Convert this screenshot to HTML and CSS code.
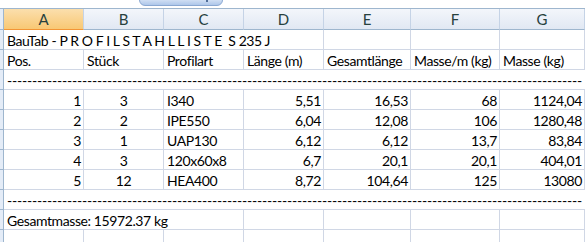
FILE: index.html
```html
<!DOCTYPE html>
<html>
<head>
<title>BauTab Profilstahlliste</title>
	<meta charset="utf-8">
	<link rel="stylesheet" href="styles.css">
</head>
<body>
<div class="window">
	<div class="topbar">
		<div class="tab"><span class="grip"></span></div>
	</div>
	<div class="sheet">
		<!-- Spaltenkopf -->
		<div class="rh hd"></div>
		<div class="ch sel">A</div>
		<div class="ch">B</div>
		<div class="ch">C</div>
		<div class="ch">D</div>
		<div class="ch">E</div>
		<div class="ch">F</div>
		<div class="ch">G</div>
		<div class="ch rest"></div>

		<!-- 1 -->
		<div class="rh"></div>
		<div class="c span4">BauTab - P R O F I L S T A H L L I S T E&nbsp; S 235 J</div>
		<div class="c"></div><div class="c"></div><div class="c"></div><div class="c rest"></div>

		<!-- 2 -->
		<div class="rh"></div>
		<div class="c">Pos.</div>
		<div class="c">Stück</div>
		<div class="c">Profilart</div>
		<div class="c">Länge (m)</div>
		<div class="c">Gesamtlänge</div>
		<div class="c">Masse/m (kg)</div>
		<div class="c">Masse (kg)</div>
		<div class="c rest"></div>

		<!-- 3 -->
		<div class="rh"></div>
		<div class="c dash">-------------------------------------------------------------------------------------------------------------------</div>

		<!-- Daten -->
		<div class="rh"></div>
		<div class="c r">1</div><div class="c m">3</div><div class="c">I340</div>
		<div class="c r">5,51</div><div class="c r">16,53</div><div class="c r">68</div><div class="c r">1124,04</div><div class="c rest"></div>

		<div class="rh"></div>
		<div class="c r">2</div><div class="c m">2</div><div class="c">IPE550</div>
		<div class="c r">6,04</div><div class="c r">12,08</div><div class="c r">106</div><div class="c r">1280,48</div><div class="c rest"></div>

		<div class="rh"></div>
		<div class="c r">3</div><div class="c m">1</div><div class="c">UAP130</div>
		<div class="c r">6,12</div><div class="c r">6,12</div><div class="c r">13,7</div><div class="c r">83,84</div><div class="c rest"></div>

		<div class="rh"></div>
		<div class="c r">4</div><div class="c m">3</div><div class="c">120x60x8</div>
		<div class="c r">6,7</div><div class="c r">20,1</div><div class="c r">20,1</div><div class="c r">404,01</div><div class="c rest"></div>

		<div class="rh"></div>
		<div class="c r">5</div><div class="c m">12</div><div class="c">HEA400</div>
		<div class="c r">8,72</div><div class="c r">104,64</div><div class="c r">125</div><div class="c r">13080</div><div class="c rest"></div>

		<!-- 9 -->
		<div class="rh"></div>
		<div class="c dash">-------------------------------------------------------------------------------------------------------------------</div>

		<!-- 10 -->
		<div class="rh"></div>
		<div class="c span3">Gesamtmasse: 15972.37 kg</div>
		<div class="c"></div><div class="c"></div><div class="c"></div><div class="c"></div><div class="c rest"></div>

		<!-- 11 -->
		<div class="rh"></div>
		<div class="c"></div><div class="c"></div><div class="c"></div><div class="c"></div>
		<div class="c"></div><div class="c"></div><div class="c"></div><div class="c rest"></div>
	</div>
</div>
</body>
</html>
```

FILE: styles.css
```css
body {
	margin: 0;
	padding: 0;
	background-color: #fff;
}
.window {
	width: 585px;
	height: 242px;
	overflow: hidden;
	font-family: Lato, "Open Sans", sans-serif;
	font-size: 14px;
	letter-spacing: -0.4px;
	color: #000;
}
.topbar {
	position: relative;
	height: 8px;
	border-bottom: 1px solid #9eb6ce;
	background-color: #fff;
}
.topbar .tab {
	position: absolute;
	left: 139px;
	top: -2px;
	width: 82px;
	height: 6px;
	border: 1px solid #8aa8d2;
	border-radius: 0 0 6px 6px;
	background: linear-gradient(#d6e3f5, #aec7ea);
}
.topbar .grip {
	position: absolute;
	right: 14px;
	top: 1px;
	width: 2px;
	height: 2px;
	background-color: #4f6d98;
}
.sheet {
	display: grid;
	grid-template-columns: 4px 80px 80px 80px 80px 87px 89px 85px 1fr;
	grid-template-rows: 21px;
	grid-auto-rows: 20px;
}
.sheet > div {
	box-sizing: border-box;
	overflow: hidden;
	white-space: nowrap;
}
.rh {
	background-color: #e4ecf7;
	border-right: 1px solid #9eb6ce;
	border-bottom: 1px solid #9eb6ce;
}
.ch {
	background: linear-gradient(#f3f6fb, #e1e8f3);
	border-right: 1px solid #c5d3e6;
	border-bottom: 1px solid #9eb6ce;
	text-align: center;
	line-height: 20px;
	font-size: 15px;
	letter-spacing: 0;
	color: #27413e;
}
.ch.sel {
	background: linear-gradient(#fbdfad, #f8c874);
	border-bottom-color: #f29536;
	border-right-color: #c5d3e6;
}
.c {
	border-right: 1px solid #d0d7e5;
	border-bottom: 1px solid #d0d7e5;
	padding: 0 3px 0 3px;
	line-height: 21px;
}
.c.r {
	text-align: right;
	padding-right: 2px;
}
.c.m {
	text-align: center;
}
.span4 {
	grid-column: span 4;
}
.span3 {
	grid-column: span 3;
}
.dash {
	grid-column: span 8;
	border-right: 0;
	letter-spacing: -0.2px;
}
```
